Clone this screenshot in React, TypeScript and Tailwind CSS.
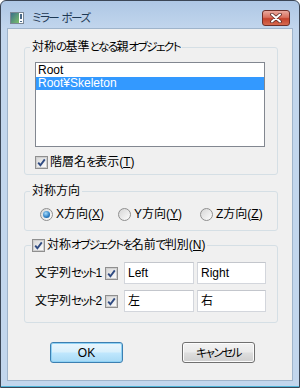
import React from 'react';

const font = "font-['Liberation_Sans','Noto_Sans_CJK_JP',sans-serif] [font-feature-settings:'palt']";

// kana in the original UI font is narrower than Noto's, so tighten kana runs only
function J({ t }: { t: string }) {
  const parts = t.match(/[\u3040-\u30ff]+|[^\u3040-\u30ff]+/g) || [];
  return (
    <>
      {parts.map((p, i) =>
        /[\u3040-\u30ff]/.test(p) ? (
          <span key={i} className="text-[11.5px] tracking-[-1.5px]">
            {p}
          </span>
        ) : (
          p
        )
      )}
    </>
  );
}

function Check({ checked = true }: { checked?: boolean }) {
  return (
    <span className="flex h-[13px] w-[13px] shrink-0 items-center justify-center border border-[#8f8f8f] bg-[#f4f4f4]">
      <span className="flex h-[11px] w-[11px] items-center justify-center border border-[#cfcfcf] bg-gradient-to-br from-[#d9d9d9] to-[#fbfbfb]">
        {checked && (
          <svg width="9" height="9" viewBox="0 0 9 9">
            <path d="M1.2 4.6 L3.4 7.2 L7.8 1.4" fill="none" stroke="#2f4b82" strokeWidth="1.9" />
          </svg>
        )}
      </span>
    </span>
  );
}

function Radio({ checked = false }: { checked?: boolean }) {
  return (
    <span className="flex h-[13px] w-[13px] shrink-0 items-center justify-center rounded-full border border-[#8f8f8f] bg-gradient-to-br from-[#d6d6d6] to-[#fdfdfd]">
      {checked && (
        <span className="h-[7px] w-[7px] rounded-full bg-[radial-gradient(circle_at_40%_35%,#a6dcfc,#2a7cc2_60%,#164c85)]" />
      )}
    </span>
  );
}

function Key({ k }: { k: string }) {
  return (
    <>
      (<span className="underline">{k}</span>)
    </>
  );
}

function TextBox({ value, w }: { value: string; w: string }) {
  return (
    <div className={`flex h-[22px] items-center border border-[#d3d6dc] border-t-[#c3c6cc] bg-white pl-[3px] ${w}`}>
      {value}
    </div>
  );
}

export default function App() {
  return (
    <div className={`h-[388px] w-[300px] overflow-hidden whitespace-nowrap text-[12px] leading-[14px] text-black ${font}`}>
      <div className="flex h-[388px] w-[300px] flex-col rounded-t-[6px] border border-[#3b4656] bg-[linear-gradient(to_bottom,#aec7e5,#c2d6ed_28px,#c2d6ed)]">
        {/* Title bar */}
        <div className="flex h-[27px] shrink-0 items-center pl-[9px] pr-[9px] pt-[7px]">
          <svg width="14" height="12" viewBox="0 0 14 12" className="shrink-0">
            <rect x="0.5" y="0.5" width="13" height="11" fill="#fff" stroke="#7a8794" />
            <rect x="1" y="1" width="8" height="10" fill="url(#g1)" />
            <rect x="10" y="2" width="2" height="5" fill="#4a6a8a" />
            <rect x="10" y="9" width="2" height="1" fill="#4a6a8a" />
            <defs>
              <linearGradient id="g1" x1="0" y1="0" x2="1" y2="1">
                <stop offset="0" stopColor="#3a6f8a" />
                <stop offset="1" stopColor="#7cc06a" />
              </linearGradient>
            </defs>
          </svg>
          <span className="ml-[8px] flex-1 text-[12px] text-[#1e3955]">
            <J t="ミラー ポーズ" />
          </span>
          <div className="flex h-[16px] w-[28px] items-center justify-center rounded-[3px] border border-[#6e2f29] bg-[linear-gradient(to_bottom,#e9a99e,#d9715f_45%,#c4422c_55%,#d66a4f)]">
            <svg width="12" height="10" viewBox="0 0 12 10">
              <path d="M2 1.5 L10 8.5 M10 1.5 L2 8.5" stroke="#5a2a26" strokeWidth="3.6" strokeLinecap="round" />
              <path d="M2 1.5 L10 8.5 M10 1.5 L2 8.5" stroke="#fff" strokeWidth="2" strokeLinecap="round" />
            </svg>
          </div>
        </div>

        {/* Client */}
        <div className="mx-[6px] flex flex-1 flex-col border border-[#9fb4cb] bg-[#f0f0f0] pl-[16px] pr-[14px] pt-[11px]">
          <fieldset className="rounded-[3px] border border-[#d5dfe5]">
            <legend className="ml-[5px] px-[2px]">
              <J t="対称の基準となる親オブジェクト" />
            </legend>
            <div className="pb-[5px] pl-[10px] pt-[8px]">
              <div className="h-[85px] w-[230px] border border-[#828790] bg-white pt-[1px]">
                <div className="h-[13px] pl-[2px] leading-[13px]">Root</div>
                <div className="h-[13px] bg-[#3399ff] pl-[2px] leading-[13px] text-white">Root¥Skeleton</div>
              </div>
              <div className="mt-[8px] flex h-[14px] items-center gap-[2px]">
                <Check />
                <span>
                  <J t="階層名を表示" />
                  <Key k="T" />
                </span>
              </div>
            </div>
          </fieldset>

          <fieldset className="mt-[9px] rounded-[3px] border border-[#d5dfe5]">
            <legend className="ml-[5px] px-[2px]">対称方向</legend>
            <div className="flex pb-[9px] pl-[15px] pt-[9px]">
              <div className="flex w-[78px] items-center gap-[3px]">
                <Radio checked />
                <span>
                  X方向<Key k="X" />
                </span>
              </div>
              <div className="flex w-[82px] items-center gap-[3px]">
                <Radio />
                <span>
                  Y方向<Key k="Y" />
                </span>
              </div>
              <div className="flex items-center gap-[3px]">
                <Radio />
                <span>
                  Z方向<Key k="Z" />
                </span>
              </div>
            </div>
          </fieldset>

          <fieldset className="mt-[7px] rounded-[3px] border border-[#d5dfe5]">
            <legend className="ml-[6px] px-[1px]">
              <span className="flex items-center gap-[2px]">
                <Check />
                <span>
                  <J t="対称オブジェクトを名前で判別" />
                  <Key k="N" />
                </span>
              </span>
            </legend>
            <div className="flex flex-col gap-[6px] pb-[10px] pl-[10px] pt-[10px]">
              <div className="flex items-center">
                <span className="w-[70px]">
                  <J t="文字列セット1" />
                </span>
                <Check />
                <TextBox value="Left" w="ml-[6px] w-[70px]" />
                <TextBox value="Right" w="ml-[3px] w-[69px]" />
              </div>
              <div className="flex items-center">
                <span className="w-[70px]">
                  <J t="文字列セット2" />
                </span>
                <Check />
                <TextBox value="左" w="ml-[6px] w-[70px]" />
                <TextBox value="右" w="ml-[3px] w-[69px]" />
              </div>
            </div>
          </fieldset>

          <div className="mt-[19px] flex gap-[59px] pl-[26px]">
            <button className="flex h-[21px] w-[73px] items-center justify-center rounded-[3px] border border-[#3c7fb1] bg-[linear-gradient(to_bottom,#eaf6fd,#d9f0fc_45%,#bee6fd_55%,#a7d9f5)] shadow-[inset_0_0_0_1px_#8fd2f5]">
              OK
            </button>
            <button className="flex h-[21px] w-[73px] items-center justify-center rounded-[3px] border border-[#707070] bg-[linear-gradient(to_bottom,#f2f2f2,#ebebeb_45%,#dddddd_55%,#cfcfcf)] shadow-[inset_0_0_0_1px_#fcfcfc]">
              <J t="キャンセル" />
            </button>
          </div>
        </div>

        {/* Bottom frame */}
        <div className="h-[6px] shrink-0 border-b border-[#4fb4d8]" />
      </div>
    </div>
  );
}
